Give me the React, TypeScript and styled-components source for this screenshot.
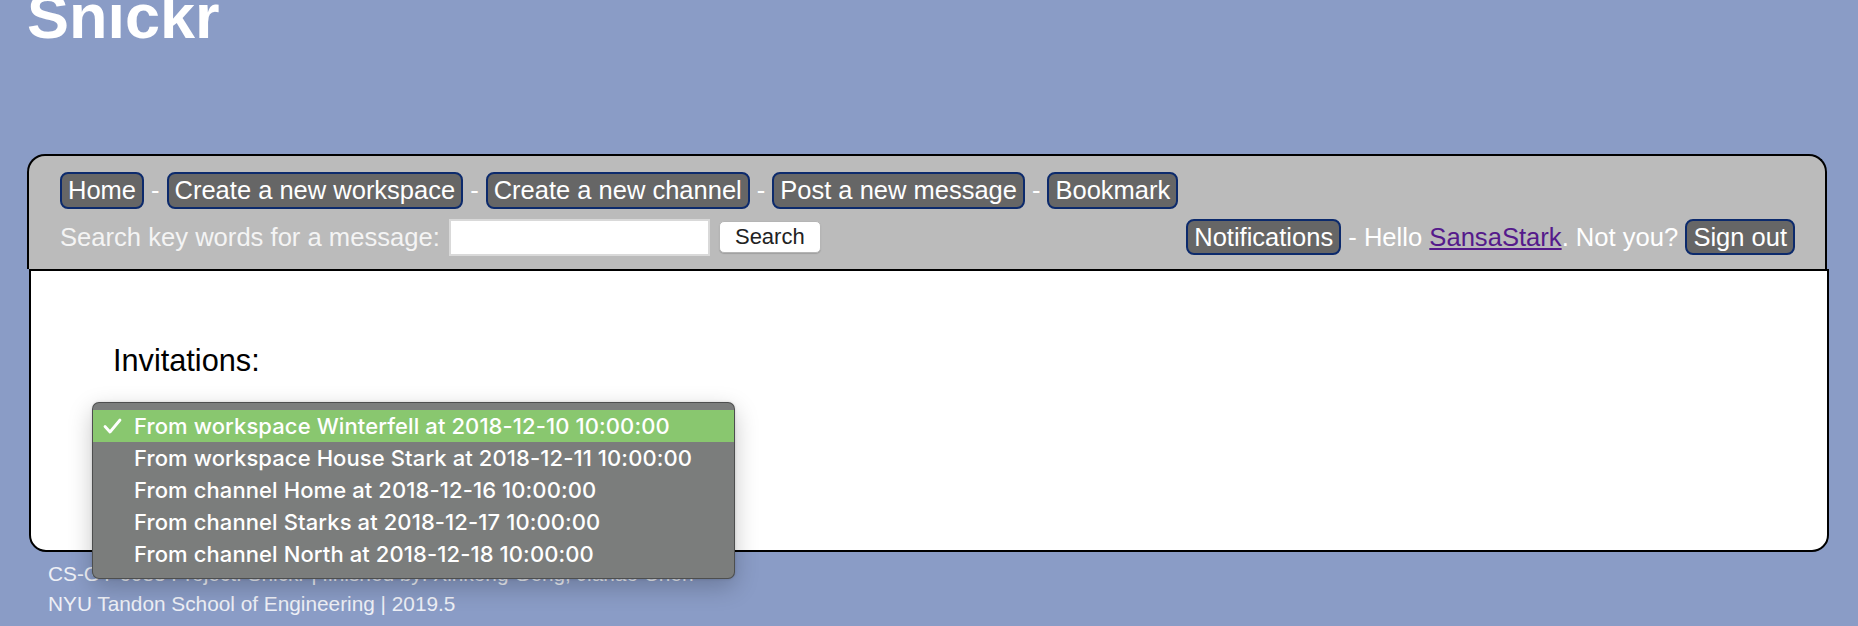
import React from "react";
import styled, { createGlobalStyle } from "styled-components";

const GlobalStyle = createGlobalStyle`
  html, body {
    margin: 0;
    padding: 0;
    background: #8a9cc6;
    font-family: "Liberation Sans", Arial, sans-serif;
    overflow: hidden;
  }
`;

const Page = styled.div`
  width: 1858px;
  height: 626px;
  overflow: hidden;
`;

const Title = styled.h1`
  margin: -20px 0 102px 27px;
  font-size: 63px;
  line-height: 72px;
  font-weight: 700;
  color: #fff;
`;

const Panel = styled.div`
  margin: 0 31px 0 27px;
`;

const Header = styled.header`
  background: #bbbbbb;
  border: 2px solid #000;
  border-bottom: none;
  border-radius: 18px 18px 0 0;
  padding: 16px 30px 13px 31px;
  display: flex;
  flex-direction: column;
  gap: 9px;
  color: #fff;
  font-size: 25.5px;
`;

const Row = styled.div<{ $spread?: boolean }>`
  display: flex;
  align-items: center;
  justify-content: ${(p) => (p.$spread ? "space-between" : "flex-start")};
  height: ${(p) => (p.$spread ? "38px" : "37px")};
  white-space: pre;
`;

const NavButton = styled.a<{ $h?: number }>`
  display: inline-flex;
  align-items: center;
  box-sizing: border-box;
  height: ${(p) => (p.$h ? `${p.$h}px` : "37px")};
  padding: 0 6px;
  background: #666666;
  border: 2px solid #0c2a6c;
  border-radius: 8px;
  color: #fff;
  font-size: 25.5px;
  text-decoration: none;
  cursor: pointer;
`;

const Sep = styled.span`
  margin: 0 7px;
  color: #fff;
`;

const Group = styled.div`
  display: flex;
  align-items: center;
  white-space: pre;
`;

const SearchLabel = styled.span`
  color: #f4f4f4;
  font-size: 25.6px;
`;

const SearchInput = styled.input`
  box-sizing: border-box;
  width: 261px;
  height: 37px;
  margin-left: 9px;
  border: 2px solid #d9d9d9;
  background: #fff;
  outline: none;
`;

const SearchButton = styled.button`
  box-sizing: border-box;
  width: 102px;
  height: 32px;
  margin-left: 9px;
  background: #fff;
  border: 1px solid #b5b5b5;
  border-radius: 5px;
  box-shadow: 0 1px 1px rgba(0, 0, 0, 0.15);
  color: #222;
  font-family: "Liberation Sans", Arial, sans-serif;
  font-size: 22px;
  padding: 0;
`;

const UserLink = styled.a`
  color: #551a8b;
  text-decoration: underline;
  font-size: 25.6px;
`;

const Plain = styled.span`
  font-size: 25.6px;
`;

const Sheet = styled.main`
  position: relative;
  box-sizing: border-box;
  height: 283px;
  margin: 0 -2px 0 2px;
  padding: 72px 0 0 82px;
  background: #fff;
  border: 2px solid #000;
  border-radius: 0 0 17px 17px;
`;

const Label = styled.div`
  font-size: 30.7px;
  line-height: 36px;
  color: #000;
`;

const SelectAnchor = styled.div`
  position: relative;
  height: 0;
`;

const Menu = styled.ul`
  position: absolute;
  top: 23px;
  left: -21px;
  z-index: 10;
  box-sizing: border-box;
  width: 643px;
  margin: 0;
  padding: 7px 0 8px;
  list-style: none;
  background: #7b7d7c;
  border: 1px solid rgba(40, 40, 40, 0.55);
  border-radius: 7px;
  box-shadow: 0 8px 24px rgba(0, 0, 0, 0.22), 0 0 3px rgba(0, 0, 0, 0.15);
`;

const MenuItem = styled.li<{ $selected?: boolean }>`
  position: relative;
  display: flex;
  align-items: center;
  height: 32px;
  padding-left: 41px;
  background: ${(p) => (p.$selected ? "#89c76f" : "transparent")};
  color: #fff;
  font-family: Inter, "Noto Sans", sans-serif;
  font-weight: 500;
  font-size: 22px;
  letter-spacing: 0.1px;
  white-space: nowrap;
`;

const Check = styled.svg`
  position: absolute;
  left: 10px;
  top: 8px;
`;

const Footer = styled.footer`
  margin-top: 7px;
  padding-left: 48px;
  font-size: 20.8px;
  line-height: 30px;
  color: #eef0f6;
`;

const invitations = [
  "From workspace Winterfell at 2018-12-10 10:00:00",
  "From workspace House Stark at 2018-12-11 10:00:00",
  "From channel Home at 2018-12-16 10:00:00",
  "From channel Starks at 2018-12-17 10:00:00",
  "From channel North at 2018-12-18 10:00:00",
];

const navItems = [
  "Home",
  "Create a new workspace",
  "Create a new channel",
  "Post a new message",
  "Bookmark",
];

export default function App() {
  return (
    <Page>
      <GlobalStyle />
      <Title>Snickr</Title>
      <Panel>
        <Header>
          <Row>
            {navItems.map((item, i) => (
              <React.Fragment key={item}>
                {i > 0 && <Sep>-</Sep>}
                <NavButton>{item}</NavButton>
              </React.Fragment>
            ))}
          </Row>
          <Row $spread>
            <Group>
              <SearchLabel>Search key words for a message:</SearchLabel>
              <SearchInput type="text" />
              <SearchButton type="button">Search</SearchButton>
            </Group>
            <Group>
              <NavButton $h={36}>Notifications</NavButton>
              <Plain>{" - Hello "}</Plain>
              <UserLink href="#">SansaStark</UserLink>
              <Plain>{". Not you? "}</Plain>
              <NavButton $h={36}>Sign out</NavButton>
            </Group>
          </Row>
        </Header>
        <Sheet>
          <Label>Invitations:</Label>
          <SelectAnchor>
            <Menu>
              {invitations.map((text, i) => (
                <MenuItem key={text} $selected={i === 0}>
                  {i === 0 && (
                    <Check width="19" height="16" viewBox="0 0 19 16">
                      <polyline
                        points="2,8.5 7,14 17,2"
                        fill="none"
                        stroke="#fff"
                        strokeWidth="2.8"
                        strokeLinecap="round"
                        strokeLinejoin="round"
                      />
                    </Check>
                  )}
                  {text}
                </MenuItem>
              ))}
            </Menu>
          </SelectAnchor>
        </Sheet>
      </Panel>
      <Footer>
        <div>CS-GY 6083 Project: Snickr | finished by: Xinkong Geng, Jiahao Chen</div>
        <div>NYU Tandon School of Engineering | 2019.5</div>
      </Footer>
    </Page>
  );
}
